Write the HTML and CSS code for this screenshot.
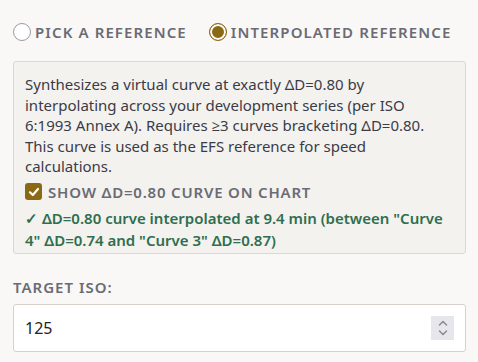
FILE: index.html
```html
<!DOCTYPE html>
<html>
<head>
<meta charset="utf-8">
<link rel="stylesheet" href="styles.css">
</head>
<body>
<div class="page">
  <div class="radios">
    <label class="radio"><span class="dot"></span><span class="rlabel">PICK A REFERENCE</span></label>
    <label class="radio"><span class="dot on"></span><span class="rlabel">INTERPOLATED REFERENCE</span></label>
  </div>
  <div class="box">
    <p class="desc">Synthesizes a virtual curve at exactly ΔD=0.80 by interpolating across your development series (per ISO 6:1993 Annex A). Requires ≥3 curves bracketing ΔD=0.80. This curve is used as the EFS reference for speed calculations.</p>
    <label class="check"><span class="cbox"><svg width="12" height="12" viewBox="0 0 12 12"><path d="M2 6.3 L4.8 9 L10 3" fill="none" stroke="#fff" stroke-width="2.2" stroke-linecap="round" stroke-linejoin="round"/></svg></span><span class="clabel">SHOW ΔD=0.80 CURVE ON CHART</span></label>
    <p class="ok">✓ ΔD=0.80 curve interpolated at 9.4 min (between "Curve 4" ΔD=0.74 and "Curve 3" ΔD=0.87)</p>
  </div>
  <div class="field">
    <div class="flabel">TARGET ISO:</div>
    <div class="input"><span class="val">125</span><span class="spin"><svg width="12" height="20" viewBox="0 0 12 20"><path d="M2.5 7 L6 3.5 L9.5 7 M2.5 13 L6 16.5 L9.5 13" fill="none" stroke="#8a8a96" stroke-width="1.5" stroke-linecap="round" stroke-linejoin="round"/></svg></span></div>
  </div>
</div>
</body>
</html>
```
FILE: styles.css
```css
* { box-sizing: border-box; }
html, body { margin: 0; padding: 0; background: #f9f8f6; }
body { font-family: "Noto Sans", "Open Sans", sans-serif; color: #3b3b45; }
.page { padding: 22px 12px 0 13px; width: 478px; }
.radios { display: flex; gap: 22px; align-items: center; height: 20px; }
.radio { display: flex; align-items: center; gap: 4px; }
.dot { width: 18px; height: 18px; border-radius: 50%; border: 1.5px solid #9a9aa4; background: #fff; display: inline-block; }
.dot.on { border: 1.5px solid #8b6914; background: #8b6914; box-shadow: inset 0 0 0 2px #fff; }
.rlabel { font-size: 15px; font-weight: 600; letter-spacing: 1.1px; color: #6b6b74; }
.box { margin-top: 19px; background: #f3f2ef; border: 1px solid #dcd8d1; border-radius: 3px; padding: 12px 12px 2px 11px; }
.desc { margin: 0; font-size: 15px; line-height: 20.6px; color: #3b3b47; }
.check { display: flex; align-items: center; gap: 6px; margin-top: 5px; }
.cbox { width: 17px; height: 17px; background: #8b6914; border-radius: 3px; display: flex; align-items: center; justify-content: center; }
.clabel { font-size: 15px; font-weight: 600; letter-spacing: 0.8px; color: #6b6b74; }
.ok { margin: 5px 0 0; font-size: 15px; line-height: 22px; font-weight: 600; color: #2f6e4e; }
.field { margin-top: 23px; }
.flabel { font-size: 15px; font-weight: 600; letter-spacing: 1px; color: #6b6b74; }
.input { margin-top: 7px; height: 48px; background: #fff; border: 1px solid #d6d2cb; border-radius: 3px; display: flex; align-items: center; justify-content: space-between; padding: 0 11px 0 11px; }
.val { font-size: 16px; color: #222; }
.spin { width: 23px; height: 24px; background: #e6e6ec; display: flex; align-items: center; justify-content: center; }
```
